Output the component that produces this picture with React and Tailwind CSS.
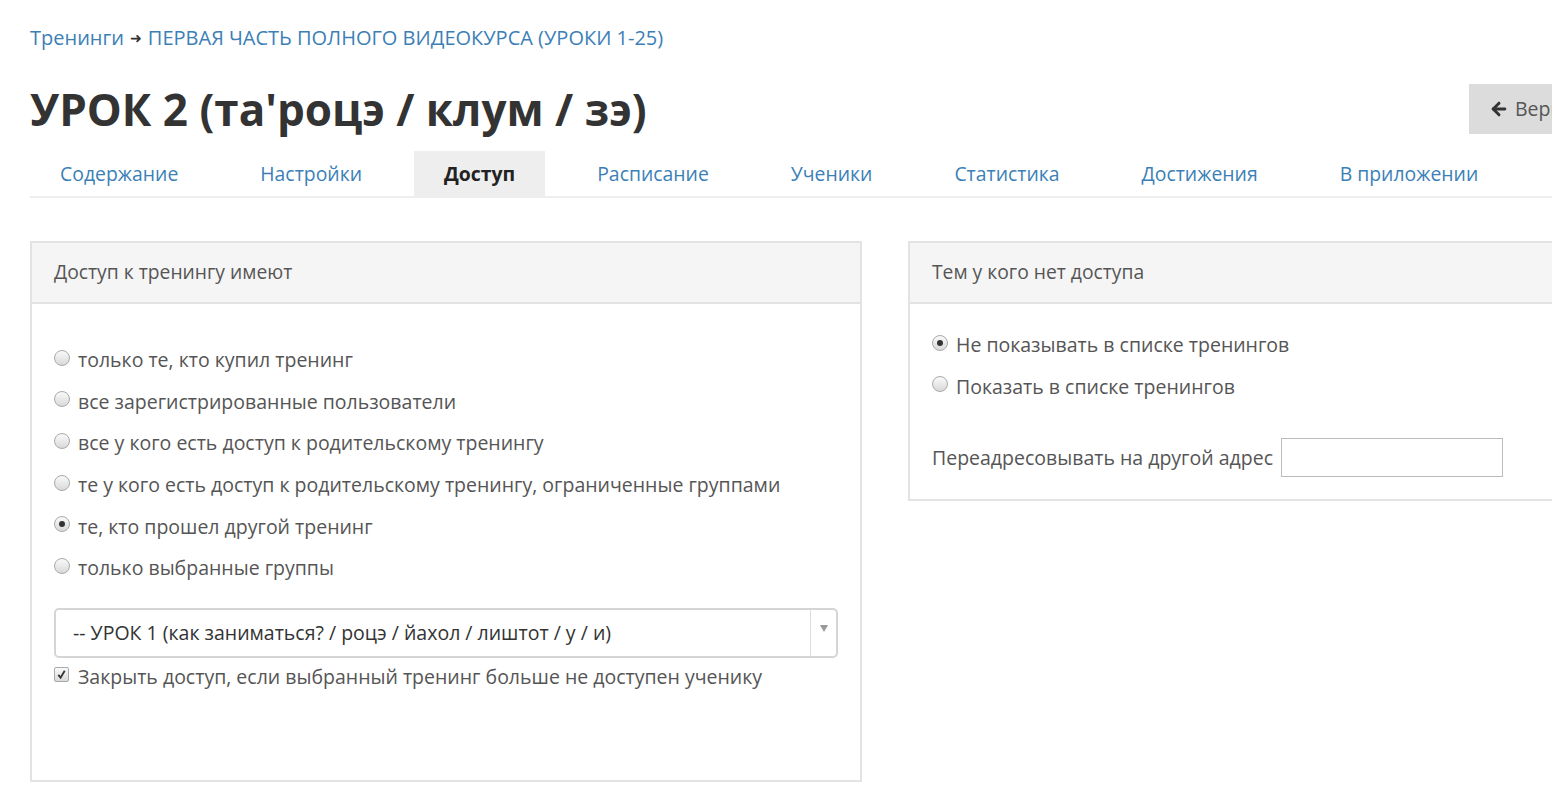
import { ArrowLeft } from 'lucide-react';

const font = { fontFamily: '"Open Sans", "Liberation Sans", sans-serif' };

const Radio = ({ checked }) => (
  <span className="relative inline-flex items-center justify-center w-[16px] h-[16px] rounded-full border border-[#a9a9a9] bg-gradient-to-b from-[#fafafa] to-[#d9d9d9] shrink-0 mr-[8px] -translate-y-[2px]">
    {checked && <span className="w-[6px] h-[6px] rounded-full bg-[#333]" />}
  </span>
);

const Checkbox = () => (
  <span className="relative inline-flex items-center justify-center w-[15px] h-[15px] rounded-[2px] border border-[#a9a9a9] bg-gradient-to-b from-[#fafafa] to-[#d9d9d9] shrink-0 mr-[9px] -translate-y-[2px]">
    <svg viewBox="0 0 12 12" className="w-[11px] h-[11px]">
      <path d="M2.5 6.5 L5 9.5 L9.5 2" fill="none" stroke="#333" strokeWidth="2" />
    </svg>
  </span>
);

const tabs = ['Содержание', 'Настройки', 'Доступ', 'Расписание', 'Ученики', 'Статистика', 'Достижения', 'В приложении'];

const leftOptions = [
  'только те, кто купил тренинг',
  'все зарегистрированные пользователи',
  'все у кого есть доступ к родительскому тренингу',
  'те у кого есть доступ к родительскому тренингу, ограниченные группами',
  'те, кто прошел другой тренинг',
  'только выбранные группы',
];

export default function App() {
  return (
    <div className="w-[1552px] h-[790px] overflow-hidden bg-white text-[#555]" style={font}>
      <div className="w-[1740px] pl-[30px] pt-[24px]">
        {/* Хлебные крошки */}
        <div className="text-[20px] leading-[28px] text-[#3c7fb6] flex items-center">
          <span>Тренинги</span>
          <span className="mx-[6px] text-[#333] text-[14px]">➜</span>
          <span>ПЕРВАЯ ЧАСТЬ ПОЛНОГО ВИДЕОКУРСА (УРОКИ 1-25)</span>
        </div>

        {/* Заголовок */}
        <div className="grid grid-cols-[1439px_auto] items-center mt-[27px]">
          <h1 className="text-[44px] font-bold text-[#333] leading-[60px]">УРОК 2 (та'роцэ / клум / зэ)</h1>
          <button className="flex items-center h-[50px] px-[20px] bg-[#dcdcdc] text-[#555] text-[19.5px] whitespace-nowrap">
            <ArrowLeft className="w-[20px] h-[20px] mr-[6px] text-[#333]" strokeWidth={3.5} />
            Вернуться к списку
          </button>
        </div>

        {/* Вкладки */}
        <div className="flex gap-[22px] border-b-2 border-[#eee] mt-[12px]">
          {tabs.map((t) => (
            <div
              key={t}
              className={
                'px-[30px] h-[45px] flex items-center text-[19.4px] ' +
                (t === 'Доступ' ? 'bg-[#eee] text-[#222] font-bold' : 'text-[#3c7fb6]')
              }
            >
              {t}
            </div>
          ))}
        </div>

        {/* Панели */}
        <div className="grid grid-cols-[832px_832px] gap-[46px] items-start mt-[43px] text-[19.5px] text-[#555]">
          <div className="border-2 border-[#e3e3e3] h-[541px]">
            <div className="bg-[#f5f5f5] border-b-2 border-[#e3e3e3] h-[61px] flex items-center px-[22px] text-[19.3px]">
              Доступ к тренингу имеют
            </div>
            <div className="px-[22px] pt-[35px]">
              {leftOptions.map((o, i) => (
                <div key={o} className="flex items-center h-[41.6px]">
                  <Radio checked={i === 4} />
                  <span>{o}</span>
                </div>
              ))}
              <div className="mt-[19px] h-[50px] border-2 border-[#d5d5d5] rounded-[5px] flex items-center text-[#333]">
                <span className="flex-1 pl-[17px]">-- УРОК 1 (как заниматься? / роцэ / йахол / лиштот / у / и)</span>
                <span className="w-[26px] h-full border-l border-[#ddd] flex items-center justify-center">
                  <span className="w-0 h-0 border-l-[4px] border-r-[4px] border-t-[7px] border-l-transparent border-r-transparent border-t-[#999] -translate-y-[4px]" />
                </span>
              </div>
              <div className="flex items-center h-[38px]">
                <Checkbox />
                <span>Закрыть доступ, если выбранный тренинг больше не доступен ученику</span>
              </div>
            </div>
          </div>

          <div className="border-2 border-[#e3e3e3] pb-[22px]">
            <div className="bg-[#f5f5f5] border-b-2 border-[#e3e3e3] h-[61px] flex items-center px-[22px] text-[19.3px]">
              Тем у кого нет доступа
            </div>
            <div className="px-[22px] pt-[20px]">
              <div className="flex items-center h-[41.6px]">
                <Radio checked />
                <span>Не показывать в списке тренингов</span>
              </div>
              <div className="flex items-center h-[41.6px]">
                <Radio />
                <span>Показать в списке тренингов</span>
              </div>
              <div className="flex items-center mt-[31px]">
                <span className="mr-[8px]">Переадресовывать на другой адрес</span>
                <input className="w-[222px] h-[39px] border border-[#bbb] outline-none" />
              </div>
            </div>
          </div>
        </div>
      </div>
    </div>
  );
}
